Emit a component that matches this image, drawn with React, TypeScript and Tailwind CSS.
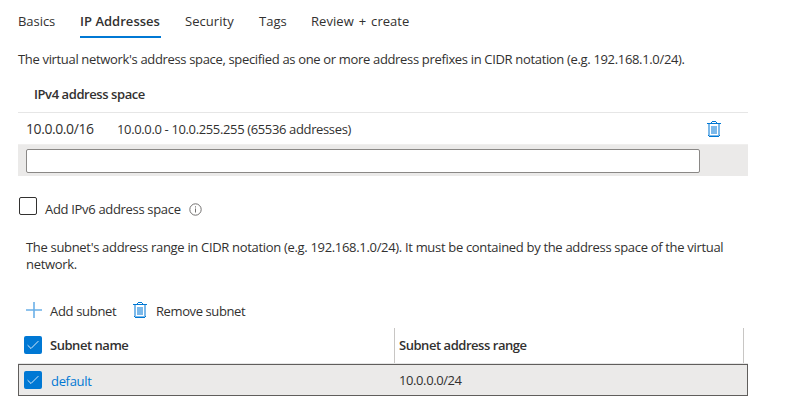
import type { ReactNode } from "react";

function Trash() {
  return (
    <svg width="14" height="16" viewBox="0 0 14 16" shapeRendering="crispEdges" className="block shrink-0">
      <path d="M1 3h12v12H1z" fill="#7cb9ea" />
      <path d="M3 3h8v11H3z" fill="#fff" />
      <path d="M4 5h6v8H4z" fill="#7cb9ea" />
      <path d="M0 2h14v1H0zM5 0h4v1H5zM2 15h10v1H2z" fill="#0078d4" />
      <path d="M4 1h1v1H4zM9 1h1v1H9z" fill="#0078d4" />
      <path d="M1 14h1v1H1zM12 14h1v1H12z" fill="#0078d4" />
    </svg>
  );
}

function Checked() {
  return (
    <span className="flex size-[18px] shrink-0 items-center justify-center rounded-[2px] bg-[#0078d4]">
      <svg width="12" height="10" viewBox="0 0 12 10" fill="none" stroke="#fff" strokeOpacity="0.85" className="block">
        <path d="M0.6 5.2L4 8.5L11.4 1.1" />
      </svg>
    </span>
  );
}

function Tab({ children, className }: { children: ReactNode; className: string }) {
  return <div className={`h-[38px] shrink-0 pt-[13px] ${className}`}>{children}</div>;
}

export default function App() {
  return (
    <div className="h-[412px] w-[786px] overflow-hidden bg-white pl-[18px] font-['Open_Sans','Noto_Sans',sans-serif] text-[13px] leading-[17px] tracking-[-0.32px] whitespace-nowrap text-[#323130]">
      <div className="flex h-[38px] tracking-[0.05px]">
        <Tab className="w-[62px] tracking-[-0.05px]">Basics</Tab>
        <Tab className="mr-6 w-[81px] border-b-2 border-[#0078d4] font-semibold tracking-[0.02px]">IP Addresses</Tab>
        <Tab className="w-[74px]">Security</Tab>
        <Tab className="w-[52px]">Tags</Tab>
        <Tab className="[word-spacing:1.5px]">Review + create</Tab>
      </div>

      <p className="mt-[13px] tracking-[-0.335px]">
        The virtual network's address space, specified as one or more address prefixes in CIDR notation (e.g. 192.168.1.0/24).
      </p>

      <div className="mt-[18px] w-[730px]">
        <div className="h-[27px] border-b border-[#e6e6e6] pl-4 font-semibold tracking-[-0.42px]">IPv4 address space</div>
        <div className="flex h-8 items-center border-b border-[#f0efee] pr-[27px] pl-2">
          <span className="w-[91px] text-sm tracking-[-0.42px]">10.0.0.0/16</span>
          <span className="flex-1 pt-px tracking-[-0.36px]">10.0.0.0 - 10.0.255.255 (65536 addresses)</span>
          <Trash />
        </div>
        <div className="h-[31px] bg-[#ebeae9] pt-1 pl-2">
          <div className="h-6 w-[674px] rounded-[2px] border border-[#8a8886] bg-white" />
        </div>
      </div>

      <div className="mt-[21px] flex h-[21px] pl-px">
        <span className="size-[18px] rounded-[2px] border border-[#323130]" />
        <span className="mt-1 ml-2 w-36">Add IPv6 address space</span>
        <svg width="13" height="13" viewBox="0 0 13 13" fill="none" stroke="#737170" className="mt-[6px]">
          <circle cx="6.5" cy="6.5" r="5.7" />
          <path d="M6.5 5.5v4M6.5 3.3v1.2" />
        </svg>
      </div>

      <p className="mt-[21px] pl-2 leading-[17px]">
        The subnet's address range in CIDR notation (e.g. 192.168.1.0/24). It must be contained by the address space of the virtual
        <br />
        network.
      </p>

      <div className="mt-[29px] flex h-[18px] pl-2">
        <svg width="16" height="16" viewBox="0 0 16 16" className="shrink-0">
          <path d="M7.2 0h1.6v16H7.2zM0 7.2h16v1.6H0z" fill="#6bb0e8" />
        </svg>
        <span className="mt-px ml-2 w-[83px]">Add subnet</span>
        <Trash />
        <span className="mt-px ml-[9px] tracking-[-0.4px]">Remove subnet</span>
      </div>

      <div className="mt-2 w-[730px]">
        <div className="flex h-9 border-b border-[#e6e6e6] font-semibold tracking-[-0.46px]">
          <div className="flex w-[376px] gap-2 pt-2 pl-[6px]">
            <Checked />
            <span className="mt-px">Subnet name</span>
          </div>
          <div className="w-[350px] border-x border-[#c8c6c4] pt-[9px] pl-1">Subnet address range</div>
        </div>
        <div className="flex h-8 border border-[#605e5c] bg-[#ebeae9] pl-[5px]">
          <div className="flex w-[375px] gap-[9px] pt-[6px]">
            <Checked />
            <span className="mt-[2px] text-[#0078d4]">default</span>
          </div>
          <span className="mt-[7px] tracking-[-0.4px]">10.0.0.0/24</span>
        </div>
      </div>
    </div>
  );
}
